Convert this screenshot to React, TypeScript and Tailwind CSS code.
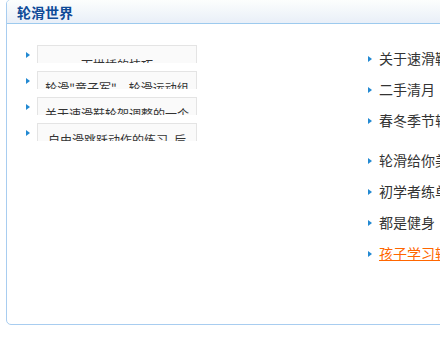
import React from 'react'

const FONT = { fontFamily: '"Noto Sans CJK SC", "Noto Sans", sans-serif' }

const picItems = [
  { title: '下拱桥的技巧', first: true },
  { title: '轮滑"童子军"，轮滑运动组织起来了', first: false },
  { title: '关于速滑鞋轮架调整的一个小问题', first: false },
  { title: '自由滑跳跃动作的练习, 后外点冰跳', first: false },
]

const groupA = ['关于速滑鞋的选择', '二手清月', '春冬季节轮滑注意']
const groupB = ['轮滑给你美丽身材', '初学者练单排轮滑', '都是健身', '孩子学习轮滑']

function Arrow() {
  return (
    <svg width="4" height="6" viewBox="0 0 4 6" className="block">
      <path d="M0 0 L4 3 L0 6 Z" fill="#2289d2" />
    </svg>
  )
}

export default function App() {
  return (
    <div className="w-[440px] h-[339px] overflow-hidden bg-white" style={FONT}>
      <div className="ml-[6px] mt-[-1px] w-[600px] h-[326px] border border-[#a8cdf0] rounded-[5px] overflow-hidden">
        {/* title bar */}
        <div className="h-[24px] bg-gradient-to-b from-[#fcfefd] to-[#e9eff8] border-b border-[#9dcaee] flex items-center pl-[10px]">
          <h2 className="text-[14px] font-bold text-[#0e4a98] leading-none">轮滑世界</h2>
        </div>

        <div className="flex">
          {/* picture list */}
          <ul className="w-[361px] pl-[19px] pt-[16px]">
            {picItems.map((item) => (
              <li key={item.title} className="flex h-[26px]">
                <div className="w-[11px] pt-[12px]">
                  <Arrow />
                </div>
                <div className="mt-[5px] w-[160px] h-[18px] overflow-hidden border border-b-0 border-[#e4e4e4] bg-[#fafafa] px-[7px]">
                  <p
                    className={
                      'text-[12px] leading-[16px] text-[#333] text-center ' +
                      (item.first ? 'pt-[11px]' : 'pt-[8px]')
                    }
                  >
                    {item.title}
                  </p>
                </div>
              </li>
            ))}
          </ul>

          {/* text list */}
          <div className="pt-[19px]">
            <ul>
              {groupA.map((t) => (
                <li key={t} className="flex items-center h-[31px] whitespace-nowrap">
                  <span className="w-[11px]">
                    <Arrow />
                  </span>
                  <span className="text-[14px] text-[#333]">{t}</span>
                </li>
              ))}
            </ul>
            <ul className="mt-[9px]">
              {groupB.map((t, i) => (
                <li key={t} className="flex items-center h-[31px] whitespace-nowrap">
                  <span className="w-[11px]">
                    <Arrow />
                  </span>
                  {i === groupB.length - 1 ? (
                    <a href="#" className="text-[14px] text-[#ff6600] underline">
                      {t}
                    </a>
                  ) : (
                    <span className="text-[14px] text-[#333]">{t}</span>
                  )}
                </li>
              ))}
            </ul>
          </div>
        </div>
      </div>
    </div>
  )
}
